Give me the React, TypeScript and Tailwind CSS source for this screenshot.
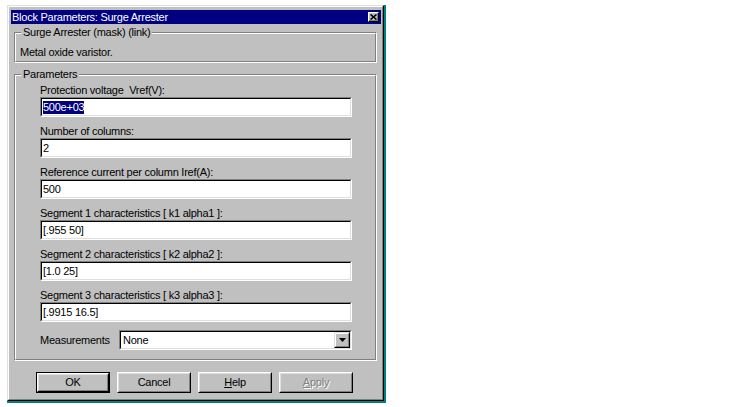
import React from "react";

const raised =
  "border-t border-l border-t-white border-l-white border-b border-r border-b-black border-r-black";
const raisedInner =
  "border-t border-l border-t-[#dfdfdf] border-l-[#dfdfdf] border-b border-r border-b-[#808080] border-r-[#808080]";

function Sunken({ className, children }: { className: string; children?: React.ReactNode }) {
  return (
    <div
      className={
        "border-t border-l border-t-[#808080] border-l-[#808080] border-b border-r border-b-white border-r-white " +
        className
      }
    >
      <div className="h-full border-t border-l border-t-black border-l-black border-b border-r border-b-[#dfdfdf] border-r-[#dfdfdf] bg-white flex items-center">
        {children}
      </div>
    </div>
  );
}

function Row({ label, value, selected }: { label: string; value: string; selected?: boolean }) {
  return (
    <div className="flex flex-col">
      <div className="h-[13px] leading-[13px] whitespace-pre">{label}</div>
      <Sunken className="h-[20px] w-[312px]">
        <span
          className={
            "ml-[1px] leading-[13px] whitespace-pre " +
            (selected ? "bg-[#000080] text-white" : "text-black")
          }
        >
          {value}
        </span>
      </Sunken>
    </div>
  );
}

function Button({
  children,
  isDefault,
}: {
  children: React.ReactNode;
  isDefault?: boolean;
}) {
  const inner = (
    <div className={"h-full w-full " + raised}>
      <div className={"h-full w-full flex items-center justify-center " + raisedInner}>
        {children}
      </div>
    </div>
  );
  return (
    <div className={"w-[74px] h-[21px] " + (isDefault ? "border border-black" : "")}>
      {isDefault ? (
        <div className="h-full w-full border-t border-l border-t-white border-l-white border-b border-r border-b-black border-r-black">
          <div className={"h-full w-full flex items-center justify-center " + raisedInner}>
            {children}
          </div>
        </div>
      ) : (
        inner
      )}
    </div>
  );
}

function GroupBox({
  legend,
  className,
  children,
}: {
  legend: string;
  className: string;
  children: React.ReactNode;
}) {
  return (
    <div
      className={
        "relative border-t border-l border-t-[#808080] border-l-[#808080] border-b border-r border-b-white border-r-white " +
        className
      }
    >
      <div className="h-full border-t border-l border-t-white border-l-white border-b border-r border-b-[#808080] border-r-[#808080]">
        {children}
      </div>
      <div className="absolute left-[6px] top-[-7px] px-[2px] bg-[#c0c0c0] h-[13px] leading-[13px] whitespace-pre">
        {legend}
      </div>
    </div>
  );
}

export default function App() {
  return (
    <div className="w-[748px] h-[407px] bg-white overflow-hidden font-['Liberation_Sans',Arial,sans-serif] text-[11px] tracking-[-0.25px] text-black">
      <div className="ml-[7px] mt-[5px] w-[377px] h-[396px] bg-[#c0c0c0] border-t border-l border-t-[#dfdfdf] border-l-[#dfdfdf] border-b border-r border-b-black border-r-black shadow-[1px_1px_0_1px_#008080]">
        <div className="h-full flex flex-col border-t border-l border-t-white border-l-white border-b border-r border-b-[#808080] border-r-[#808080]">
          {/* Title bar */}
          <div className="mt-[3px] ml-[2px] mr-[1px] h-[14px] bg-[#000080] flex items-center justify-between">
            <span className="text-white pl-[1px] leading-[13px] whitespace-pre">
              Block Parameters: Surge Arrester
            </span>
            <div className={"w-[11px] h-[10px] mr-[2px] bg-[#c0c0c0] " + raised}>
              <div className="h-full w-full flex items-center justify-center border-b border-r border-b-[#808080] border-r-[#808080]">
                <svg width="7" height="6" viewBox="0 0 7 6">
                  <path d="M0.5 0.5 L6.5 5.5 M6.5 0.5 L0.5 5.5" stroke="black" strokeWidth="1.6" />
                </svg>
              </div>
            </div>
          </div>

          {/* Group 1 */}
          <GroupBox
            legend="Surge Arrester (mask) (link)"
            className="mt-[8px] ml-[5px] mr-[5px] h-[31px]"
          >
            <div className="pt-[12px] pl-[4px] leading-[13px] whitespace-pre">Metal oxide varistor.</div>
          </GroupBox>

          {/* Group 2 */}
          <GroupBox legend="Parameters" className="mt-[11px] ml-[5px] mr-[5px] h-[287px]">
            <div className="pt-[8px] pl-[24px] flex flex-col gap-[8px]">
              <Row label="Protection voltage  Vref(V):" value="500e+03" selected />
              <Row label="Number of columns:" value="2" />
              <Row label="Reference current per column Iref(A):" value="500" />
              <Row label="Segment 1 characteristics [ k1 alpha1 ]:" value="[.955 50]" />
              <Row label="Segment 2 characteristics [ k2 alpha2 ]:" value="[1.0 25]" />
              <Row label="Segment 3 characteristics [ k3 alpha3 ]:" value="[.9915 16.5]" />
              <div className="flex items-center h-[20px]">
                <div className="w-[79px] leading-[13px] pt-[1px]">Measurements</div>
                <Sunken className="h-[20px] w-[233px]">
                  <span className="flex-1 pl-[2px] leading-[13px]">None</span>
                  <div className={"w-[16px] h-[16px] bg-[#c0c0c0] " + "border-t border-l border-t-[#dfdfdf] border-l-[#dfdfdf] border-b border-r border-b-black border-r-black"}>
                    <div className="h-full w-full flex items-center justify-center border-t border-l border-t-white border-l-white border-b border-r border-b-[#808080] border-r-[#808080]">
                      <svg width="7" height="4" viewBox="0 0 7 4">
                        <path d="M0 0 H7 L3.5 4 Z" fill="black" />
                      </svg>
                    </div>
                  </div>
                </Sunken>
              </div>
            </div>
          </GroupBox>

          {/* Buttons */}
          <div className="mt-[11px] ml-[27px] flex gap-[7px]">
            <Button isDefault>OK</Button>
            <Button>Cancel</Button>
            <Button>
              <span>
                <span className="underline">H</span>elp
              </span>
            </Button>
            <Button>
              <span className="text-[#808080] [text-shadow:1px_1px_0_#ffffff]">
                <span className="underline">A</span>pply
              </span>
            </Button>
          </div>
        </div>
      </div>
    </div>
  );
}
